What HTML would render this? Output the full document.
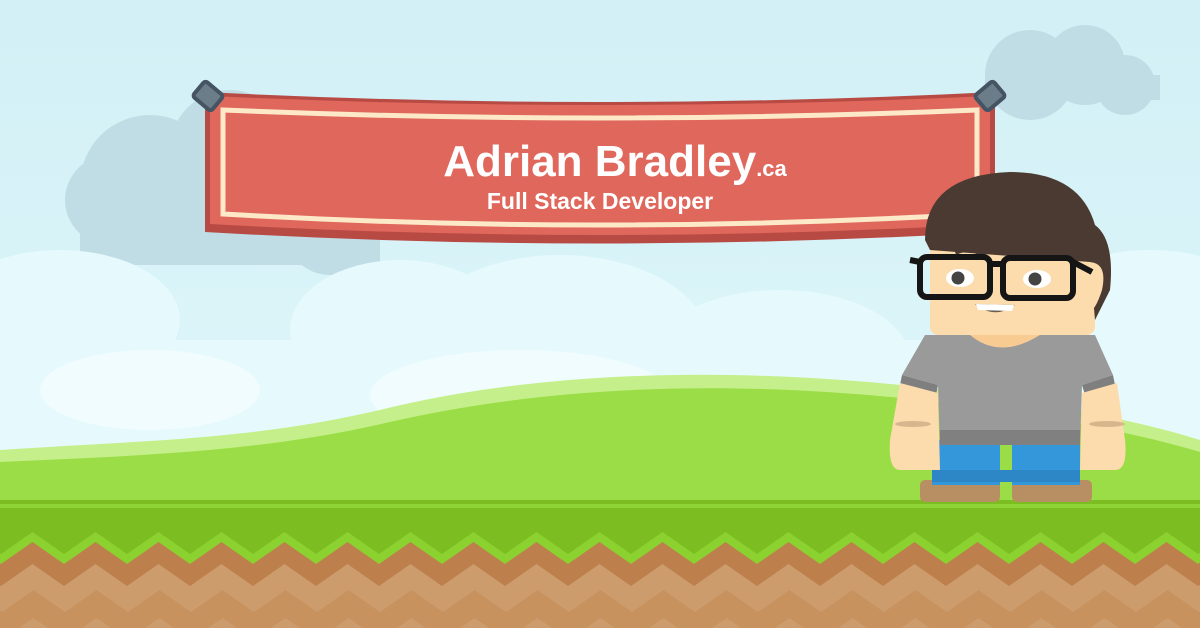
<!DOCTYPE html>
<html><head><meta charset="utf-8"><style>
html,body{margin:0;padding:0;width:1200px;height:628px;overflow:hidden;background:#d4f1f7}
svg{display:block}
</style></head><body>
<svg width="1200" height="628" viewBox="0 0 1200 628" xmlns="http://www.w3.org/2000/svg">
<defs>
<linearGradient id="sky" x1="0" y1="0" x2="0" y2="1">
<stop offset="0" stop-color="#d2f0f6"/><stop offset="1" stop-color="#e2f8fb"/>
</linearGradient>
<pattern id="zz" width="63" height="56" patternUnits="userSpaceOnUse" x="2" y="528">
<rect width="63" height="56" fill="#c8925f"/>
<path d="M0 0 L31.5 -22 L63 0 V28 L31.5 6 L0 28Z" fill="#cc9c6c"/>
<path d="M0 56 L31.5 34 L63 56 V84 L31.5 62 L0 84Z" fill="#cc9c6c"/>
</pattern>
</defs>
<rect width="1200" height="628" fill="url(#sky)"/>
<g fill="#c0dde6">
<circle cx="150" cy="185" r="70"/><circle cx="230" cy="150" r="60"/><circle cx="110" cy="200" r="45"/>
<rect x="80" y="185" width="300" height="80"/>
<circle cx="330" cy="230" r="45"/>
<circle cx="1030" cy="75" r="45"/><circle cx="1085" cy="65" r="40"/><circle cx="1125" cy="85" r="30"/>
<rect x="985" y="75" width="175" height="25"/>
</g>
<g fill="#e6fafd">
<ellipse cx="60" cy="320" rx="120" ry="70"/>
<ellipse cx="400" cy="330" rx="110" ry="70"/>
<ellipse cx="560" cy="345" rx="150" ry="90"/>
<ellipse cx="780" cy="360" rx="130" ry="70"/>
<ellipse cx="1150" cy="330" rx="130" ry="80"/>
<rect x="0" y="340" width="1200" height="120"/>
</g>
<g fill="#f0fcfe">
<ellipse cx="150" cy="390" rx="110" ry="40"/><ellipse cx="520" cy="395" rx="150" ry="45"/>
</g>
<path d="M0 450 C150 440 250 440 380 410 C520 375 700 365 900 385 C1000 395 1120 415 1200 440 V520 H0Z" fill="#c5ef8a"/>
<path d="M0 462 C150 455 260 452 390 422 C530 390 700 378 900 398 C1000 408 1120 428 1200 452 V520 H0Z" fill="#9bdd46"/>
<!-- ground -->
<rect x="0" y="506" width="1200" height="122" fill="url(#zz)"/>
<path d="M-61 506 H1261 V560 l-31.5 -22 -31.5 22 -31.5 -22 -31.5 22 -31.5 -22 -31.5 22 -31.5 -22 -31.5 22 -31.5 -22 -31.5 22 -31.5 -22 -31.5 22 -31.5 -22 -31.5 22 -31.5 -22 -31.5 22 -31.5 -22 -31.5 22 -31.5 -22 -31.5 22 -31.5 -22 -31.5 22 -31.5 -22 -31.5 22 -31.5 -22 -31.5 22 -31.5 -22 -31.5 22 -31.5 -22 -31.5 22 -31.5 -22 -31.5 22 -31.5 -22 -31.5 22 -31.5 -22 -31.5 22 -31.5 -22 -31.5 22 -31.5 -22 -31.5 22 -31.5 -22 -31.5 22 -31.5 -22 -31.5 22 -31.5 -22 -31.5 22 -31.5 -22 -31.5 22 -31.5 -22 -31.5 22 -31.5 -22 -31.5 22 -31.5 -22 -31.5 22 Z" fill="#bd7f4c" transform="translate(0,26)"/>
<path d="M-61 506 H1261 V560 l-31.5 -22 -31.5 22 -31.5 -22 -31.5 22 -31.5 -22 -31.5 22 -31.5 -22 -31.5 22 -31.5 -22 -31.5 22 -31.5 -22 -31.5 22 -31.5 -22 -31.5 22 -31.5 -22 -31.5 22 -31.5 -22 -31.5 22 -31.5 -22 -31.5 22 -31.5 -22 -31.5 22 -31.5 -22 -31.5 22 -31.5 -22 -31.5 22 -31.5 -22 -31.5 22 -31.5 -22 -31.5 22 -31.5 -22 -31.5 22 -31.5 -22 -31.5 22 -31.5 -22 -31.5 22 -31.5 -22 -31.5 22 -31.5 -22 -31.5 22 -31.5 -22 -31.5 22 -31.5 -22 -31.5 22 -31.5 -22 -31.5 22 -31.5 -22 -31.5 22 -31.5 -22 -31.5 22 -31.5 -22 -31.5 22 -31.5 -22 -31.5 22 Z" fill="#8bd12f" transform="translate(0,4)"/>
<path d="M-61 506 H1261 V560 l-31.5 -22 -31.5 22 -31.5 -22 -31.5 22 -31.5 -22 -31.5 22 -31.5 -22 -31.5 22 -31.5 -22 -31.5 22 -31.5 -22 -31.5 22 -31.5 -22 -31.5 22 -31.5 -22 -31.5 22 -31.5 -22 -31.5 22 -31.5 -22 -31.5 22 -31.5 -22 -31.5 22 -31.5 -22 -31.5 22 -31.5 -22 -31.5 22 -31.5 -22 -31.5 22 -31.5 -22 -31.5 22 -31.5 -22 -31.5 22 -31.5 -22 -31.5 22 -31.5 -22 -31.5 22 -31.5 -22 -31.5 22 -31.5 -22 -31.5 22 -31.5 -22 -31.5 22 -31.5 -22 -31.5 22 -31.5 -22 -31.5 22 -31.5 -22 -31.5 22 -31.5 -22 -31.5 22 -31.5 -22 -31.5 22 -31.5 -22 -31.5 22 -31.5 -22 -31.5 22 Z" fill="#7cbd21" transform="translate(0,-6)"/>
<rect x="0" y="504" width="1200" height="4" fill="#8fd436"/>
<!-- banner -->
<path d="M205 92 Q600 112 995 92 L995 232 Q600 255 205 232Z" fill="#b84a44"/>
<path d="M210 96 Q600 114 990 96 L990 224 Q600 246 210 224Z" fill="#e0675c"/>
<path d="M223 110 Q600 126 977 110 L977 214 Q600 236 223 214Z" fill="none" stroke="#fde9c7" stroke-width="5"/>
<g transform="rotate(40 208 96)"><rect x="196" y="86" width="24" height="20" rx="3" fill="#6c7d8a" stroke="#455463" stroke-width="4"/></g>
<g transform="rotate(-40 990 96)"><rect x="978" y="86" width="24" height="20" rx="3" fill="#6c7d8a" stroke="#455463" stroke-width="4"/></g>
<text x="615" y="176" text-anchor="middle" font-family="Liberation Sans, sans-serif" font-weight="bold" fill="#fff"><tspan font-size="44">Adrian Bradley</tspan><tspan font-size="22">.ca</tspan></text>
<text x="600" y="209" text-anchor="middle" font-family="Liberation Sans, sans-serif" font-weight="bold" font-size="23" fill="#fff">Full Stack Developer</text>
<!-- character -->
<g>
<rect x="920" y="480" width="80" height="22" rx="5" fill="#b88f63"/>
<rect x="1012" y="480" width="80" height="22" rx="5" fill="#b88f63"/>
<rect x="932" y="440" width="68" height="45" fill="#3497d9"/>
<rect x="1012" y="440" width="68" height="45" fill="#3497d9"/>
<rect x="932" y="470" width="148" height="12" fill="#2d86c6"/>
<path d="M925 335 L1095 335 L1113 375 L1082 385 L1080 445 L940 445 L938 385 L902 375Z" fill="#9a9a9a"/>
<rect x="940" y="430" width="140" height="15" fill="#808080"/>
<path d="M902 375 L938 385 L936 395 L900 385Z" fill="#7f7f7f"/>
<path d="M1113 375 L1082 385 L1085 395 L1115 385Z" fill="#7f7f7f"/>
<path d="M900 383 L938 393 L940 470 L900 470 Q888 470 890 440Z" fill="#fcdcad"/>
<path d="M1117 383 L1082 393 L1080 470 L1115 470 Q1128 470 1125 440Z" fill="#fcdcad"/>
<ellipse cx="913" cy="424" rx="18" ry="3" fill="#d7b68e"/>
<ellipse cx="1107" cy="424" rx="18" ry="3" fill="#d7b68e"/>
<rect x="930" y="220" width="165" height="115" rx="8" fill="#fcdcad"/>
<path d="M970 335 Q1000 360 1040 335Z" fill="#f8cb93"/>
<path d="M925 240 Q925 175 1010 172 Q1080 172 1095 225 Q1115 240 1110 290 L1095 320 L1090 262 L930 250Z" fill="#4a3a31"/>
<path d="M1088 262 Q1108 262 1102 290 Q1095 312 1088 312Z" fill="#fcdcad"/>
<path d="M955 252 Q970 245 985 255" stroke="#4a3a31" stroke-width="6" fill="none"/>
<path d="M1025 255 Q1040 245 1055 255" stroke="#4a3a31" stroke-width="6" fill="none"/>
<ellipse cx="960" cy="278" rx="14" ry="9" fill="#fff"/><circle cx="958" cy="278" r="6.5" fill="#444"/>
<ellipse cx="1037" cy="279" rx="14" ry="9" fill="#fff"/><circle cx="1035" cy="279" r="6.5" fill="#444"/>
<path d="M975 304 Q995 320 1015 305Z" fill="#6a5d52"/><path d="M976 304 L1014 305 L1012 311 L978 310Z" fill="#fff"/>
<g fill="none" stroke="#151515" stroke-width="6">
<rect x="920" y="257" width="70" height="40" rx="7"/>
<rect x="1003" y="258" width="70" height="40" rx="7"/>
<path d="M988 264 L1005 264"/><path d="M910 260 L920 262"/><path d="M1073 262 L1092 272"/>
</g>
</g>
</svg>
</body></html>
